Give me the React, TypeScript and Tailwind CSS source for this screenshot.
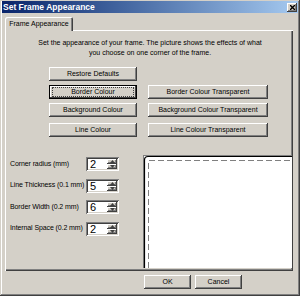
const raised =
  "bg-[#d4d0c8] shadow-[inset_-1px_-1px_#404040,inset_1px_1px_#ffffff,inset_-2px_-2px_#808080]";

function Btn({ label, w, focus }: { label: string; w: string; focus?: boolean }) {
  if (focus) {
    return (
      <div className={`${w} h-[14px] border border-black`}>
        <div className="bg-[#d4d0c8] shadow-[inset_-1px_-1px_#404040,inset_1px_1px_#ffffff] h-full px-[2px] py-[1px]">
          <div className="w-full h-full border border-dotted border-[#404040] flex items-center justify-center leading-[8px]">
            {label}
          </div>
        </div>
      </div>
    );
  }
  return (
    <div className={`${w} h-[14px] ${raised} flex items-center justify-center`}>{label}</div>
  );
}

function Spin({ label, value }: { label: string; value: string }) {
  return (
    <div className="flex items-center h-[14px]">
      <span className="w-[81px] pl-[5px] whitespace-nowrap tracking-[-0.1px]">{label}</span>
      <div className="w-[33px] h-[14px] bg-white flex shadow-[inset_1px_1px_#808080,inset_-1px_-1px_#ffffff,inset_2px_2px_#404040,inset_-2px_-2px_#d4d0c8] p-[2px]">
        <span className="flex-1 pl-[2px] text-[11px] leading-[10px] text-black">{value}</span>
        <div className="w-[10px] flex flex-col">
          <div className={`${raised} flex-1 flex items-center justify-center`}>
            <svg width="5" height="3" viewBox="0 0 5 3">
              <path d="M2.5 0 L5 3 L0 3 Z" fill="#404040" />
            </svg>
          </div>
          <div className={`${raised} flex-1 flex items-center justify-center`}>
            <svg width="5" height="3" viewBox="0 0 5 3">
              <path d="M0 0 L5 0 L2.5 3 Z" fill="#404040" />
            </svg>
          </div>
        </div>
      </div>
    </div>
  );
}

export default function App() {
  return (
    <div
      className="w-[300px] h-[296px] bg-[#d4d0c8] p-[2px] shadow-[inset_-1px_-1px_#404040,inset_1px_1px_#d4d0c8,inset_-2px_-2px_#808080,inset_2px_2px_#ffffff] text-[7px] text-black"
      style={{ fontFamily: '"Liberation Sans", Arial, sans-serif' }}
    >
      {/* title bar */}
      <div className="h-[12px] -mt-[1px] bg-gradient-to-r from-[#0a246a] to-[#a6caf0] flex items-center justify-between pl-[1px] pr-[1px]">
        <span className="text-white font-bold text-[8.5px] leading-none">Set Frame Appearance</span>
        <div className={`${raised} w-[10px] h-[9px] flex items-center justify-center`}>
          <svg width="5" height="5" viewBox="0 0 5 5">
            <path d="M0 0 L5 5 M5 0 L0 5" stroke="#000" strokeWidth="1.4" />
          </svg>
        </div>
      </div>

      {/* tab strip */}
      <div className="mt-[4px] ml-[3px] flex">
        <div className="w-[68px] h-[14px] rounded-t-[2px] shadow-[inset_1px_1px_#ffffff,inset_-1px_0_#404040,inset_-2px_0_#808080] flex items-center justify-center relative z-10 bg-[#d4d0c8]">
          Frame Appearance
        </div>
      </div>

      {/* panel */}
      <div className="ml-[3px] -mt-[1px] w-[288px] h-[241px] shadow-[inset_1px_1px_#ffffff,inset_-1px_-1px_#404040,inset_-2px_-2px_#808080] pt-[8px]">
        <p className="text-center leading-[10px] pl-[2px]">
          Set the appearance of your frame. The picture shows the effects of what
          <br />
          you choose on one corner of the frame.
        </p>

        <div className="mt-[9px] ml-[44px] grid grid-cols-[88px_120px] gap-x-[11px] gap-y-[4px]">
          <Btn label="Restore Defaults" w="w-[88px]" />
          <div />
          <Btn label="Border Colour" w="w-[88px]" focus />
          <Btn label="Border Colour Transparent" w="w-[120px]" />
          <Btn label="Background Colour" w="w-[88px]" />
          <Btn label="Background Colour Transparent" w="w-[120px]" />
          <div className="mt-[2px]">
            <Btn label="Line Colour" w="w-[88px]" />
          </div>
          <div className="mt-[2px]">
            <Btn label="Line Colour Transparent" w="w-[120px]" />
          </div>
        </div>

        <div className="mt-[18px] flex">
          <div className="pt-[2px] flex flex-col gap-[7.5px]">
            <Spin label="Corner radius (mm)" value="2" />
            <Spin label="Line Thickness (0.1 mm)" value="5" />
            <Spin label="Border Width (0.2 mm)" value="6" />
            <Spin label="Internal Space (0.2 mm)" value="2" />
          </div>
          <div className="ml-[24px] w-[149px] h-[113px] bg-white shadow-[inset_1px_1px_#808080,inset_-1px_-1px_#ffffff]">
            <svg width="149" height="113" viewBox="0 0 149 113">
              <path d="M1.5 113 V5 Q1.5 1.5 5 1.5 H149" fill="none" stroke="#000" strokeWidth="1.2" />
              <path d="M5.5 113 V5.5 H149" fill="none" stroke="#808080" strokeWidth="1" strokeDasharray="6 3" />
            </svg>
          </div>
        </div>
      </div>

      {/* bottom buttons */}
      <div className="mt-[4px] ml-[142px] flex gap-[4px]">
        <Btn label="OK" w="w-[47px]" />
        <Btn label="Cancel" w="w-[47px]" />
      </div>
    </div>
  );
}
